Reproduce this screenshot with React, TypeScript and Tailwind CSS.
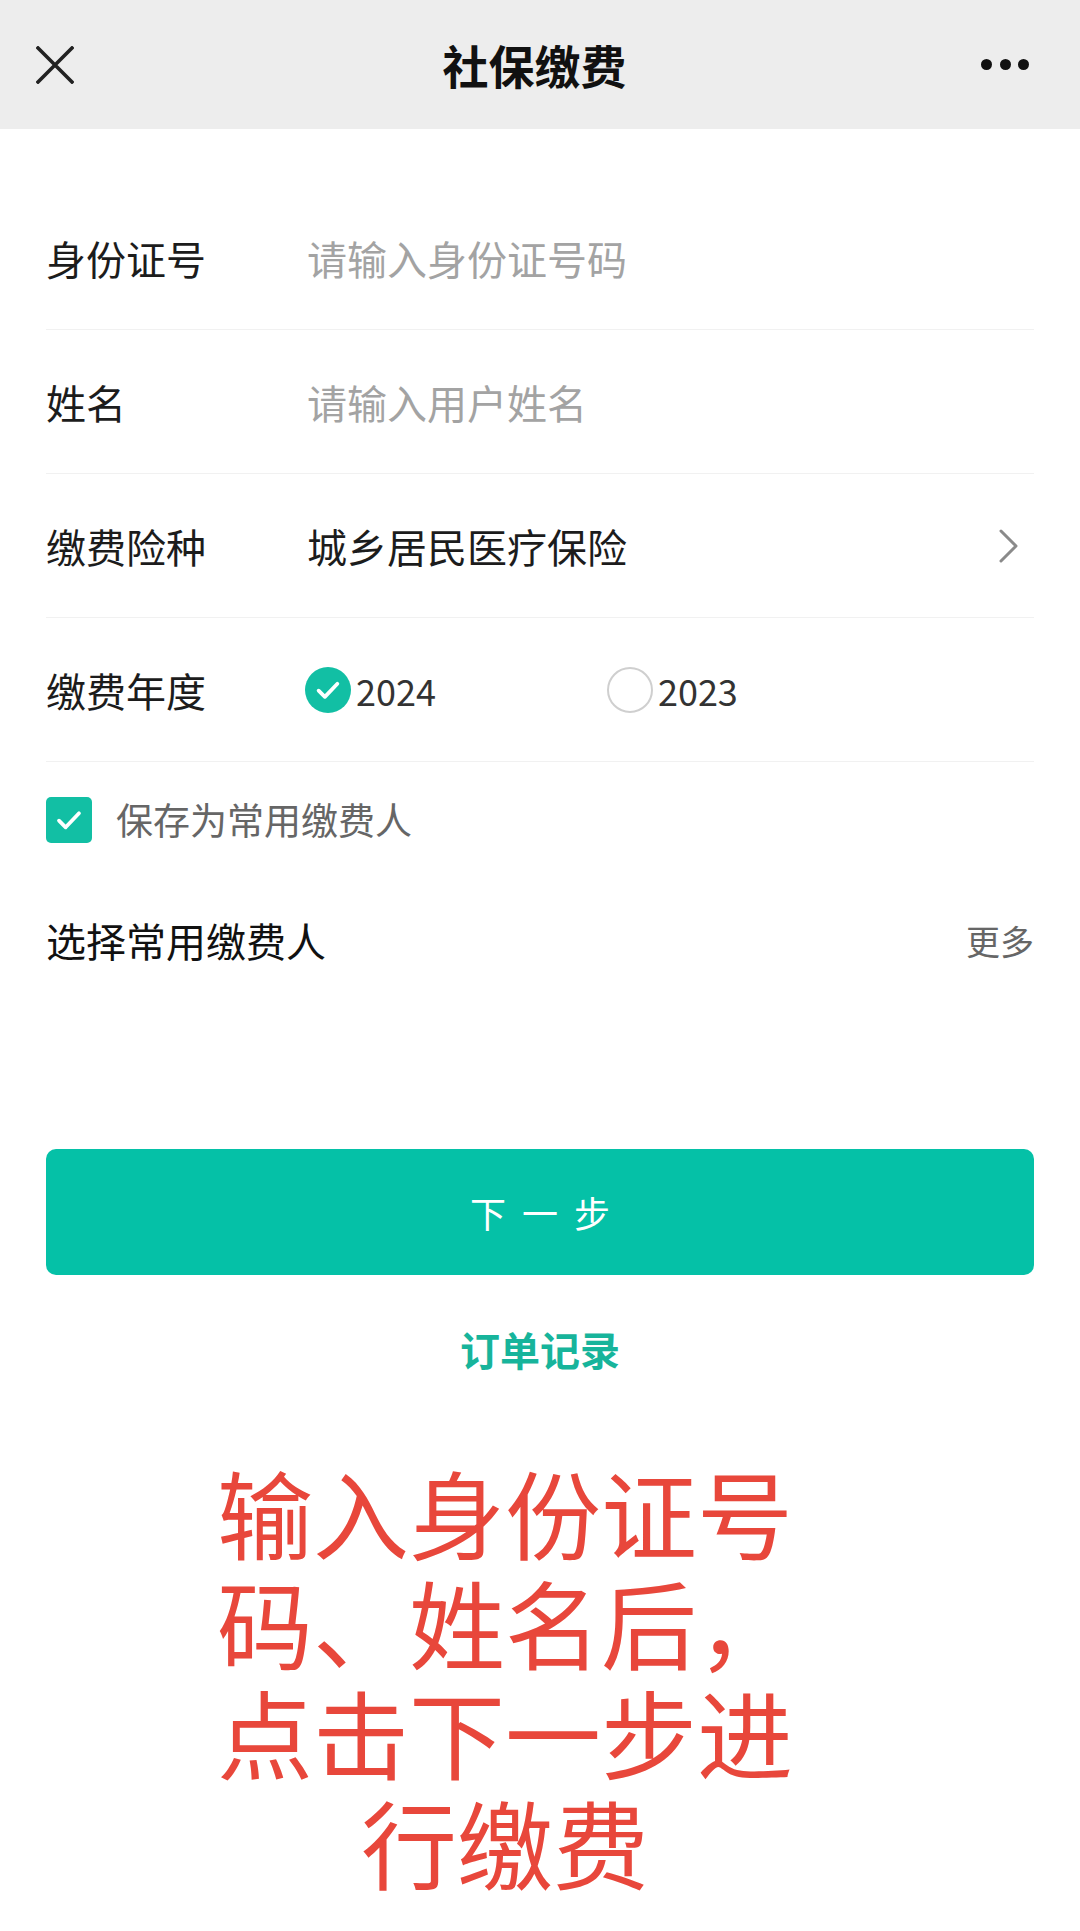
import React, { useState } from 'react'

const font = { fontFamily: '"Noto Sans CJK SC", "Noto Sans", sans-serif' }

function Row({ label, children }: { label: string; children: React.ReactNode }) {
  return (
    <div className="flex h-[144px] items-center border-b border-[#f1f1f1]">
      <div className="w-[261px] shrink-0 text-[40px] text-[#1c1c1c]">{label}</div>
      <div className="flex flex-1 items-center">{children}</div>
    </div>
  )
}

function Radio({ checked, label, onClick }: { checked: boolean; label: string; onClick: () => void }) {
  return (
    <button onClick={onClick} className="flex items-center gap-[5px]">
      {checked ? (
        <span className="flex h-[46px] w-[46px] items-center justify-center rounded-full bg-[#12bfa4]">
          <svg width="30" height="30" viewBox="0 0 24 24" fill="none" stroke="#fff" strokeWidth="3" strokeLinecap="round" strokeLinejoin="round">
            <path d="M4.5 12.5l5 5L19.5 7" />
          </svg>
        </span>
      ) : (
        <span className="h-[46px] w-[46px] rounded-full border-2 border-[#cfcfcf]" />
      )}
      <span className="text-[36px] text-[#333]">{label}</span>
    </button>
  )
}

export default function App() {
  const [year, setYear] = useState('2024')
  const [save, setSave] = useState(true)

  return (
    <div className="min-h-[1931px] bg-white" style={font}>
      {/* Top bar */}
      <header className="flex h-[129px] items-center justify-between bg-[#ededed] pl-[36px] pr-[51px]">
        <svg width="38" height="38" viewBox="0 0 38 38" stroke="#222" strokeWidth="3.6" strokeLinecap="square">
          <path d="M2 2L36 36M36 2L2 36" />
        </svg>
        <h1 className="ml-[14px] text-[46px] font-bold text-[#111]">社保缴费</h1>
        <div className="flex w-[48px] items-center justify-between">
          <span className="h-[11px] w-[11px] rounded-full bg-[#111]" />
          <span className="h-[11px] w-[11px] rounded-full bg-[#111]" />
          <span className="h-[11px] w-[11px] rounded-full bg-[#111]" />
        </div>
      </header>

      <main className="px-[46px] pt-[57px]">
        <Row label="身份证号">
          <input
            placeholder="请输入身份证号码"
            className="w-full bg-transparent text-[40px] text-[#222] outline-none placeholder:text-[#a3a3a3]"
          />
        </Row>
        <Row label="姓名">
          <input
            placeholder="请输入用户姓名"
            className="w-full bg-transparent text-[40px] text-[#222] outline-none placeholder:text-[#a3a3a3]"
          />
        </Row>
        <Row label="缴费险种">
          <span className="flex-1 text-[40px] text-[#1c1c1c]">城乡居民医疗保险</span>
          <svg width="22" height="36" viewBox="0 0 22 36" fill="none" stroke="#8a8a8a" strokeWidth="3" strokeLinecap="round" strokeLinejoin="round" className="mr-[14px]">
            <path d="M3 3l15 15L3 33" />
          </svg>
        </Row>
        <Row label="缴费年度">
          <div className="ml-[-2px] flex items-center gap-[171px]">
            <Radio checked={year === '2024'} label="2024" onClick={() => setYear('2024')} />
            <Radio checked={year === '2023'} label="2023" onClick={() => setYear('2023')} />
          </div>
        </Row>

        {/* Save as frequent payer */}
        <button onClick={() => setSave(!save)} className="flex h-[116px] items-center gap-[24px]">
          <span className={`flex h-[46px] w-[46px] items-center justify-center rounded-[5px] ${save ? 'bg-[#12bfa4]' : 'border-2 border-[#cfcfcf]'}`}>
            {save && (
              <svg width="32" height="32" viewBox="0 0 24 24" fill="none" stroke="#fff" strokeWidth="2.8" strokeLinecap="round" strokeLinejoin="round">
                <path d="M4.5 12.5l5 5L19.5 7" />
              </svg>
            )}
          </span>
          <span className="text-[37px] text-[#666]">保存为常用缴费人</span>
        </button>

        <div className="flex h-[124px] items-center justify-between">
          <span className="text-[40px] text-[#111]">选择常用缴费人</span>
          <span className="text-[34px] text-[#666]">更多</span>
        </div>

        <button className="mt-[147px] flex h-[126px] w-full items-center justify-center rounded-[10px] bg-[#05c1a7] text-[36px] tracking-[16px] text-white">
          <span className="pl-[16px]">下一步</span>
        </button>

        <div className="mt-[49px] text-center text-[40px] font-bold leading-[50px] text-[#17b49b]">订单记录</div>
      </main>

      {/* Red instruction text */}
      <div className="mt-[82px] ml-[214px] w-[582px] text-center text-[96px] leading-[110px] text-[#e8473b]">
        输入身份证号码、姓名后，点击下一步进行缴费
      </div>
    </div>
  )
}
